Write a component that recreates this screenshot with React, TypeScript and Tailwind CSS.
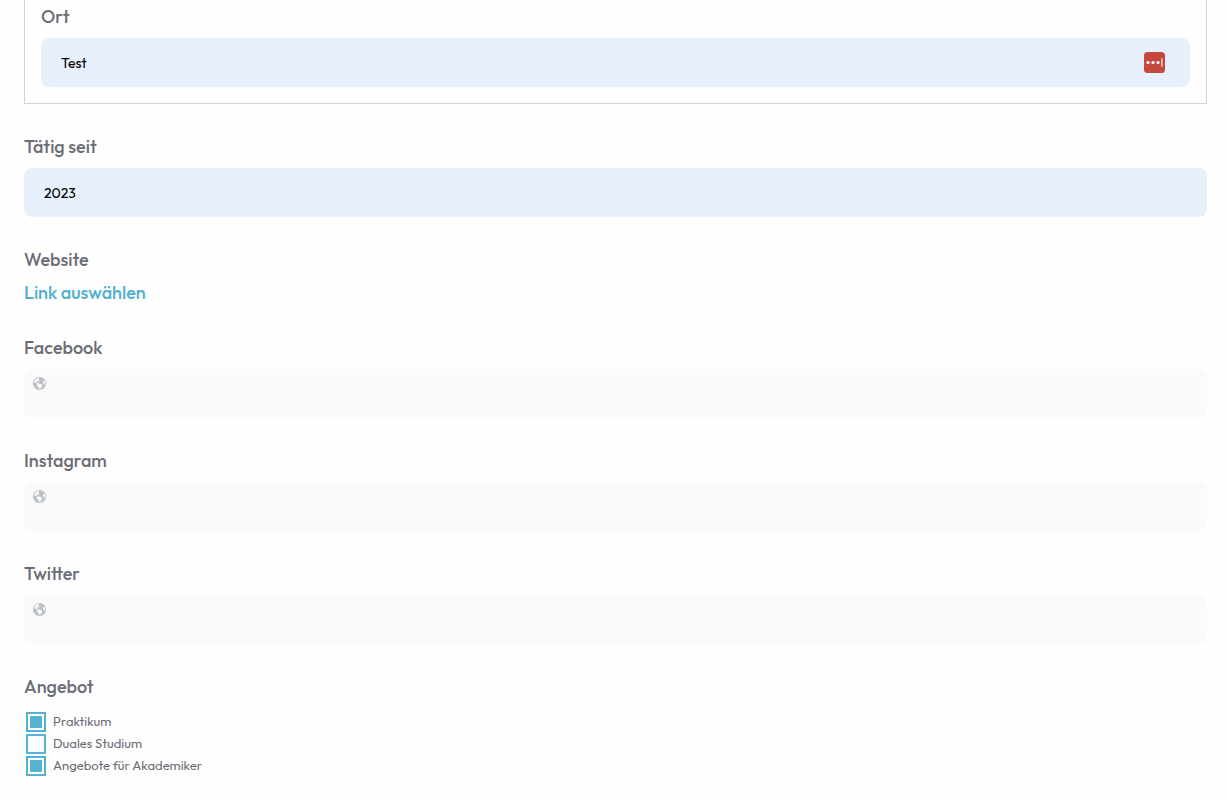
import { ReactNode, useState } from 'react';

const inputClass =
  'block h-[49px] w-full rounded-lg px-5 text-sm leading-5 text-black outline-none';

const Field = ({
  label,
  htmlFor,
  children,
}: {
  label: string;
  htmlFor: string;
  children: ReactNode;
}) => (
  <div className="flex flex-col gap-[7px]">
    <label htmlFor={htmlFor} className="text-lg leading-7 font-medium">
      {label}
    </label>
    {children}
  </div>
);

const GlobeIcon = () => (
  <svg
    viewBox="0 0 18 18"
    className="pointer-events-none absolute top-2 left-[9px] size-[13px] fill-[#bcc1c6]"
    aria-hidden="true"
  >
    <path d="M9 0C4.03 0 0 4.03 0 9s4.03 9 9 9 9-4.03 9-9-4.03-9-9-9zm3.46 11.95c0 1.47-.8 3.3-4.06 4.7.3-4.17-2.52-3.69-3.2-5 .126-1.1.804-2.063 1.8-2.55-1.552-.266-3-.96-4.18-2 .05.47.28.904.64 1.21-.782-.295-1.458-.817-1.94-1.5.977-3.225 3.883-5.482 7.25-5.63-.84 1.38-1.5 4.13 0 5.57C7.23 7 6.26 5 5.41 5.79c-1.13 1.06.33 2.51 3.42 3.08 3.29.59 3.66 1.58 3.63 3.08zm1.34-4c-.32-1.11.62-2.23 1.69-3.14 1.356 1.955 1.67 4.45.84 6.68-.77-1.89-2.17-2.32-2.53-3.57z" />
  </svg>
);

const UrlField = ({ label, id }: { label: string; id: string }) => (
  <Field label={label} htmlFor={id}>
    <div className="relative">
      <GlobeIcon />
      <input id={id} type="url" className={`${inputClass} bg-[#fafafa] pl-8`} />
    </div>
  </Field>
);

const offers = [
  { id: 'praktikum', label: 'Praktikum', checked: true },
  { id: 'duales-studium', label: 'Duales Studium', checked: false },
  { id: 'akademiker', label: 'Angebote für Akademiker', checked: true },
];

const App = () => {
  const [ort, setOrt] = useState('Test');
  const [since, setSince] = useState('2023');

  return (
    <form className="flex min-h-screen flex-col gap-[29px] bg-[#fefefe] pr-[21px] pb-6 pl-6 font-['Outfit','Lato',sans-serif] text-[#6b6d76]">
      <div className="border border-t-0 border-[#d0d2d6] px-4 pt-[3px] pb-4">
        <Field label="Ort" htmlFor="ort">
          <div className="relative">
            <input
              id="ort"
              type="text"
              value={ort}
              onChange={(e) => setOrt(e.target.value)}
              className={`${inputClass} bg-[#e8f0fe]`}
            />
            {/* password manager button */}
            <button
              type="button"
              aria-label="Passwort-Manager"
              className="absolute top-[14px] right-[25px] size-[21px]"
            >
              <svg viewBox="0 0 21 21" className="block size-full">
                <rect width="21" height="21" rx="3.5" fill="#c5483f" />
                <circle cx="4" cy="10.5" r="1.6" fill="#fff" />
                <circle cx="9" cy="10.5" r="1.6" fill="#fff" />
                <circle cx="14" cy="10.5" r="1.6" fill="#fff" />
                <rect x="17.2" y="6.3" width="1.4" height="8.4" rx=".5" fill="#f3d5d2" />
              </svg>
            </button>
          </div>
        </Field>
      </div>

      <Field label="Tätig seit" htmlFor="since">
        <input
          id="since"
          type="text"
          value={since}
          onChange={(e) => setSince(e.target.value)}
          className={`${inputClass} bg-[#e8f0fe]`}
        />
      </Field>

      <div className="flex flex-col items-start gap-[7px]">
        <span className="text-lg leading-7 font-medium">Website</span>
        <a href="#website" className="text-lg leading-6 font-medium text-[#4fb0d0]">
          Link auswählen
        </a>
      </div>

      <UrlField label="Facebook" id="facebook" />
      <UrlField label="Instagram" id="instagram" />
      <UrlField label="Twitter" id="twitter" />

      <fieldset>
        <legend className="text-lg leading-7 font-medium">Angebot</legend>
        <ul className="mt-[11px] pl-[2px]">
          {offers.map((offer) => (
            <li key={offer.id} className="flex h-[22px] items-start gap-[7px]">
              <input
                id={offer.id}
                type="checkbox"
                defaultChecked={offer.checked}
                className="size-5 shrink-0 appearance-none border-2 border-[#54b2d2] bg-white bg-clip-content p-[2px] checked:bg-[#54b2d2]"
              />
              <label htmlFor={offer.id} className="text-[13px] leading-[18px]">
                {offer.label}
              </label>
            </li>
          ))}
        </ul>
      </fieldset>
    </form>
  );
};

export default App;
